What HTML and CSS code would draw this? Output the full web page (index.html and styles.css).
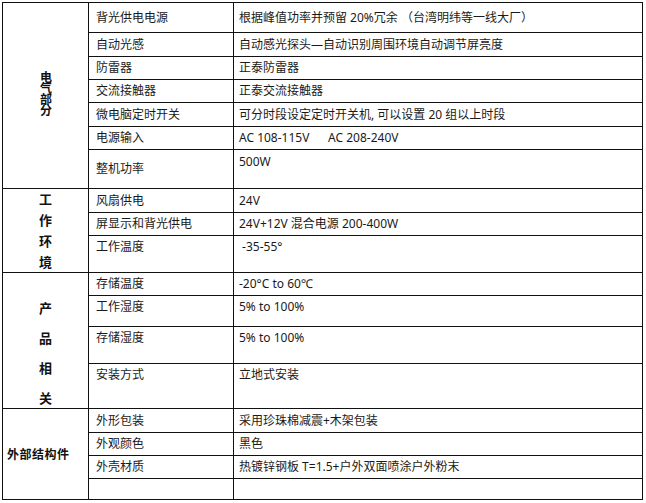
FILE: index.html
```html
<!DOCTYPE html>
<html lang="zh-CN">
<head>
<meta charset="utf-8">
<title>参数表</title>
<link rel="stylesheet" href="styles.css">
</head>
<body>
<div class="spec">
  <div class="cell cat cat-elec"><span class="vert">电气部分</span></div>
  <div class="cell name mid">背光供电电源</div>
  <div class="cell val mid">根据峰值功率并预留 20%冗余 （台湾明纬等一线大厂）</div>
  <div class="cell name mid">自动光感</div>
  <div class="cell val mid">自动感光探头—自动识别周围环境自动调节屏亮度</div>
  <div class="cell name mid">防雷器</div>
  <div class="cell val mid">正泰防雷器</div>
  <div class="cell name mid">交流接触器</div>
  <div class="cell val mid">正泰交流接触器</div>
  <div class="cell name mid">微电脑定时开关</div>
  <div class="cell val mid">可分时段设定定时开关机, 可以设置 20 组以上时段</div>
  <div class="cell name mid">电源输入</div>
  <div class="cell val mid">AC 108-115V&nbsp;&nbsp;&nbsp;&nbsp;&nbsp; AC 208-240V</div>
  <div class="cell name mid">整机功率</div>
  <div class="cell val low">500W</div>

  <div class="cell cat cat-env"><span class="vert">工作环境</span></div>
  <div class="cell name mid">风扇供电</div>
  <div class="cell val mid">24V</div>
  <div class="cell name mid">屏显示和背光供电</div>
  <div class="cell val mid">24V+12V 混合电源 200-400W</div>
  <div class="cell name">工作温度</div>
  <div class="cell val">&nbsp;-35-55°</div>

  <div class="cell cat cat-prod"><span class="vert">产品相关</span></div>
  <div class="cell name mid">存储温度</div>
  <div class="cell val mid">-20°C to 60℃</div>
  <div class="cell name">工作湿度</div>
  <div class="cell val">5% to 100%</div>
  <div class="cell name">存储湿度</div>
  <div class="cell val">5% to 100%</div>
  <div class="cell name">安装方式</div>
  <div class="cell val">立地式安装</div>

  <div class="cell cat cat-ext">外部结构件</div>
  <div class="cell name mid">外形包装</div>
  <div class="cell val mid">采用珍珠棉减震+木架包装</div>
  <div class="cell name mid">外观颜色</div>
  <div class="cell val mid">黑色</div>
  <div class="cell name mid">外壳材质</div>
  <div class="cell val mid">热镀锌钢板 T=1.5+户外双面喷涂户外粉末</div>
  <div class="cell name"></div>
  <div class="cell val"></div>
</div>
</body>
</html>
```
FILE: styles.css
```css
html, body {
  margin: 0;
  padding: 0;
  background: #fff;
}

body {
  padding: 2px 0 0 2px;
}

.spec {
  display: grid;
  width: max-content;
  grid-template-columns: 85px 144px 408px;
  grid-template-rows: 29px 23px 22px 22px 23px 22px 38px 23px 22px 36px 22px 30px 36px 44px 23px 22px 22px 20px;
  gap: 1px;
  padding: 1px;
  background: #111;
  font-family: "Noto Sans", "Noto Sans CJK SC", sans-serif;
  font-size: 12px;
  line-height: 16px;
  color: #1a1a1a;
}

.cell {
  background: #fff;
  white-space: nowrap;
  padding-top: 3px;
  box-sizing: border-box;
  min-width: 0;
  min-height: 0;
}

.name {
  padding-left: 7px;
}

.val {
  padding-left: 5px;
}

.mid {
  display: flex;
  align-items: center;
  padding-top: 0;
}

.low {
  padding-top: 4px;
}

.cat {
  grid-column: 1;
  font-family: "Noto Sans CJK SC", sans-serif;
  font-weight: bold;
  color: #111;
  display: flex;
  flex-direction: column;
  align-items: center;
  padding-top: 0;
}

.vert {
  writing-mode: vertical-rl;
  text-orientation: upright;
  line-height: 1;
}

.cat-elec {
  grid-row: 1 / 8;
  padding-top: 68px;
  font-size: 12px;
  letter-spacing: -1px;
}

.cat-env {
  grid-row: 8 / 11;
  padding-top: 4px;
  font-size: 13px;
  letter-spacing: 7.7px;
}

.cat-prod {
  grid-row: 11 / 15;
  padding-top: 29px;
  font-size: 13px;
  letter-spacing: 16.7px;
}

.cat-ext {
  grid-row: 15 / 19;
  justify-content: center;
  align-items: flex-start;
  padding-left: 4px;
  font-size: 12px;
  letter-spacing: 0.5px;
}
```
